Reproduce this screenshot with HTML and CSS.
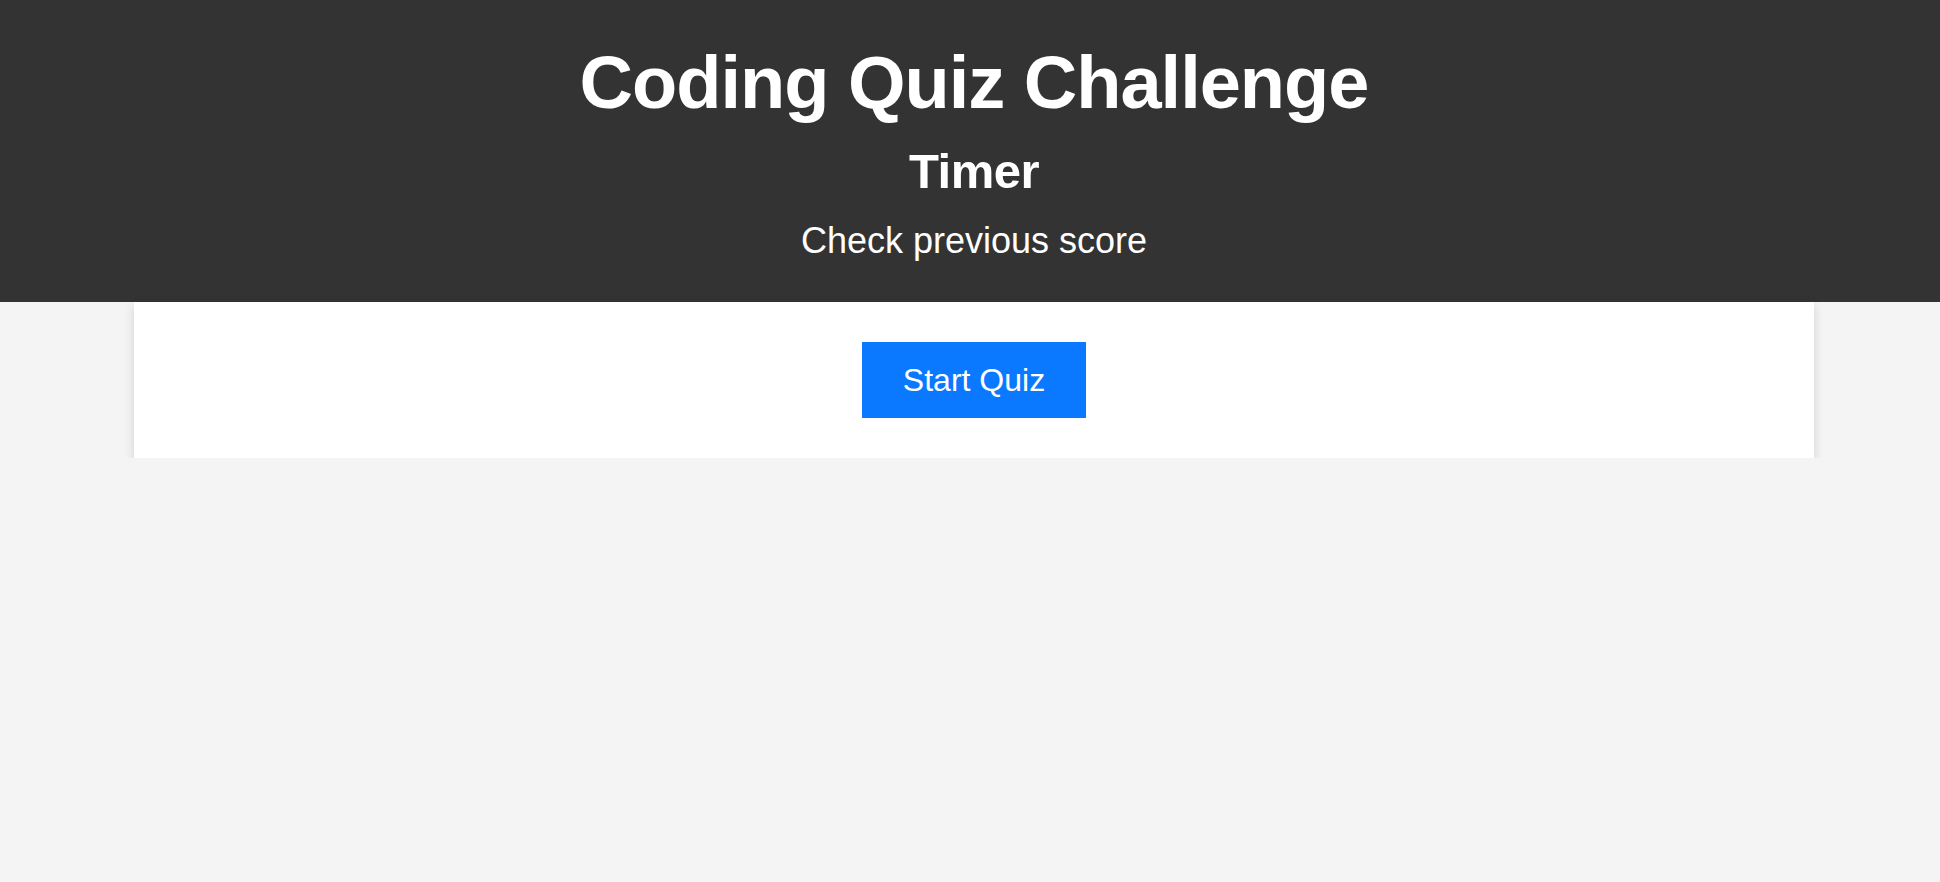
FILE: index.html
```html
<!DOCTYPE html>
<html lang="en">
<head>
<meta charset="utf-8">
<title>Coding Quiz Challenge</title>
<link rel="stylesheet" href="styles.css">
</head>
<body>
<header class="site-header">
  <h1 class="title">Coding Quiz Challenge</h1>
  <h2 class="timer">Timer</h2>
  <p class="scores">Check previous score</p>
</header>
<main class="main">
  <section class="card">
    <button class="start-btn" type="button">Start Quiz</button>
  </section>
</main>
</body>
</html>
```
FILE: styles.css
```css
* { box-sizing: border-box; }
html, body { margin: 0; padding: 0; }
body {
  background: #f4f4f4;
  font-family: "Liberation Sans", Arial, Helvetica, sans-serif;
  color: #fff;
}
.site-header {
  background: #333333;
  padding: 41px 0 0 8px;
  text-align: center;
  height: 302px;
}
.title {
  margin: 0;
  font-size: 74px;
  line-height: 84px;
  letter-spacing: -1px;
  font-weight: 700;
}
.timer {
  margin: 18px 0 0;
  font-size: 49px;
  line-height: 56px;
  letter-spacing: -0.5px;
  font-weight: 700;
}
.scores {
  margin: 20px 0 0;
  font-size: 36px;
  line-height: 44px;
  font-weight: 400;
}
.main {
  padding-left: 8px;
}
.card {
  width: 1680px;
  margin: 0 auto;
  background: #fff;
  padding: 40px 0;
  display: flex;
  justify-content: center;
  box-shadow: 0 4px 10px rgba(0, 0, 0, 0.15);
}
.start-btn {
  background: #0a78ff;
  color: #fff;
  border: none;
  border-radius: 0;
  font-family: "Liberation Sans", Arial, Helvetica, sans-serif;
  font-size: 32px;
  line-height: 36px;
  padding: 20px 41px;
  cursor: pointer;
}
```
